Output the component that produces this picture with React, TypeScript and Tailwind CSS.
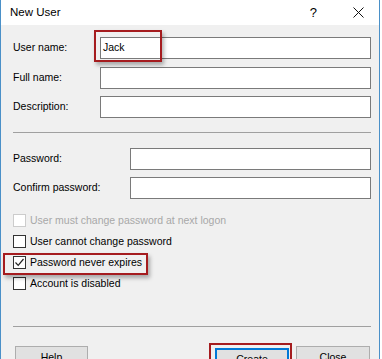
import React from 'react';

const font = { fontFamily: '"Liberation Sans", Arial, sans-serif' };

function Field({ label, labelWidth, value }: { label: string; labelWidth: string; value?: string }) {
  return (
    <div className="flex items-center h-[22px]">
      <span className={`${labelWidth} shrink-0 text-[10.5px] text-black`}>{label}</span>
      <div className="flex-1 h-[22px] bg-white border border-[#7a7a7a] flex items-center pl-[2px] text-[10.5px] text-black">
        {value}
      </div>
    </div>
  );
}

function Check({ label, checked, disabled }: { label: string; checked?: boolean; disabled?: boolean }) {
  return (
    <div className="flex items-center h-[21px]">
      <div
        className={`w-[13px] h-[13px] bg-white border flex items-center justify-center ${
          disabled ? 'border-[#cccccc]' : 'border-[#333333]'
        }`}
      >
        {checked && (
          <svg width="11" height="11" viewBox="0 0 11 11">
            <path d="M1.5 5.5 L4.2 8.3 L9.5 2" fill="none" stroke="#222" strokeWidth="1.2" />
          </svg>
        )}
      </div>
      <span className={`ml-[4px] text-[10.5px] ${disabled ? 'text-[#a8a8a8]' : 'text-black'}`}>{label}</span>
    </div>
  );
}

export default function App() {
  return (
    <div className="w-[382px] h-[359px] bg-white overflow-hidden" style={font}>
      <div className="w-[380px] h-[359px] border-x border-[#4a90c8] flex flex-col bg-[#f0f0f0]">
        {/* Title bar */}
        <div className="h-[25px] shrink-0 bg-white flex items-center pl-[9px]">
          <span className="text-[11.5px] text-black">New User</span>
          <span className="ml-auto text-[13px] text-black mr-[36px]">?</span>
          <svg width="11" height="11" viewBox="0 0 11 11" className="mr-[15px]">
            <path d="M0.5 0.5 L10.5 10.5 M10.5 0.5 L0.5 10.5" stroke="#111" strokeWidth="1" />
          </svg>
        </div>

        {/* Body */}
        <div className="flex-1 flex flex-col pl-[12px] pr-[8px] pt-[12px]">
          <div className="relative">
            <Field label="User name:" labelWidth="w-[87px]" value="Jack" />
            <div className="absolute left-[81px] top-[-7px] w-[68px] h-[32px] border-2 border-[#a51c1f] shadow-[2px_3px_4px_rgba(0,0,0,0.3)]" />
          </div>
          <div className="mt-[8px]">
            <Field label="Full name:" labelWidth="w-[87px]" />
          </div>
          <div className="mt-[7px]">
            <Field label="Description:" labelWidth="w-[87px]" />
          </div>

          <div className="mt-[14px] h-px bg-[#a0a0a0]" />

          <div className="mt-[15px]">
            <Field label="Password:" labelWidth="w-[117px]" />
          </div>
          <div className="mt-[7px]">
            <Field label="Confirm password:" labelWidth="w-[117px]" />
          </div>

          <div className="mt-[11px] flex flex-col">
            <Check label="User must change password at next logon" disabled />
            <Check label="User cannot change password" />
            <div className="relative">
              <Check label="Password never expires" checked />
              <div className="absolute left-[-10px] top-[1px] w-[145px] h-[22px] border-2 border-[#a51c1f] shadow-[2px_3px_4px_rgba(0,0,0,0.3)]" />
            </div>
            <Check label="Account is disabled" />
          </div>

          <div className="mt-[32px] h-px bg-[#a0a0a0]" />

          <div className="mt-[19px] flex items-start pl-[2px] pr-[1px]">
            <button className="w-[73px] h-[23px] bg-[#e1e1e1] border border-[#adadad] text-[10.5px] text-black">
              Help
            </button>
            <div className="ml-auto relative">
              <button className="w-[74px] h-[23px] bg-[#e1e1e1] border-2 border-[#0078d7] text-[10.5px] text-black">
                Create
              </button>
              <div className="absolute left-[-6px] top-[-3px] w-[83px] h-[30px] border-2 border-[#a51c1f]" />
            </div>
            <button className="ml-[7px] w-[74px] h-[23px] bg-[#e1e1e1] border border-[#adadad] text-[10.5px] text-black">
              Close
            </button>
          </div>
        </div>
      </div>
    </div>
  );
}
